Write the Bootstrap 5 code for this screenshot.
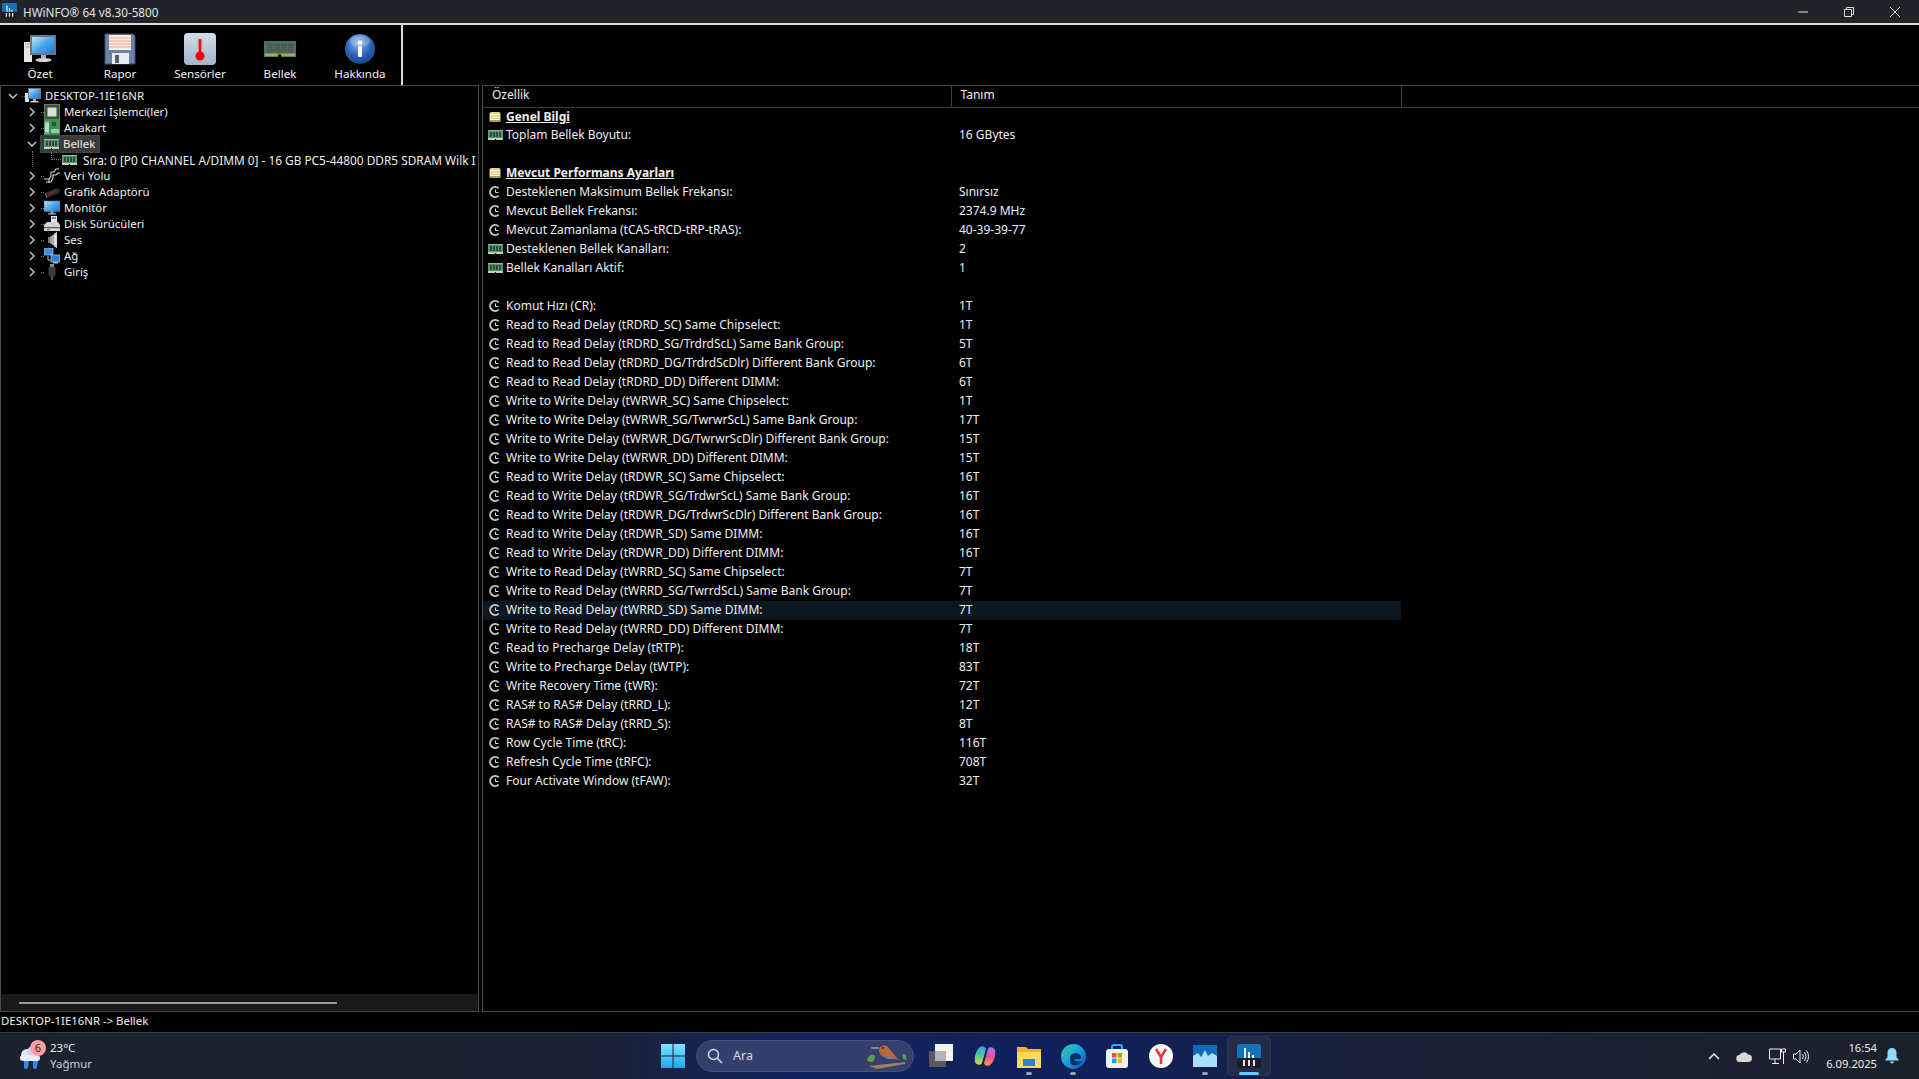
<!DOCTYPE html>
<html lang="en">
<head>
  <meta charset="UTF-8" />
  <meta name="viewport" content="width=device-width, initial-scale=1.0" />
  <title>HWiNFO 64</title>
  <link href="https://cdn.jsdelivr.net/npm/bootstrap@5.3.0/dist/css/bootstrap.min.css" rel="stylesheet" />
  <style>
    html, body { height: 100%; }
    body { background: #000; color: #eee; font-family: "Noto Sans", "Liberation Sans", sans-serif; font-size: 12px; line-height: 16px; overflow: hidden; }
    svg { flex: none; }
    .app-shell { height: 1079px; }
    .title-strip { height: 25px; background: #202327; border-bottom: 2px solid #dcdcdc; flex: none; font-size: 11.7px; color: #e4e4e4; }
    .title-strip .app-logo { margin: 0 6px 2px 2px; }
    .win-ctl { width: 46px; }
    .win-ctls { padding-right: 1px; }
    .tool-strip { height: 60px; flex: none; }
    .tool-items { width: 403px; border-right: 2px solid #dcdcdc; }
    .tool-btn { width: 80px; padding-top: 8px; text-align: center; color: #f0f0f0; font-size: 11.6px; }
    .tool-btn svg { display: block; margin: 0 auto 1px; }
    .work-area { height: 927px; flex: none; }
    .tree-pane { width: 479px; border: 1px solid #4a4a4a; font-size: 11.4px; }
    .tree-scroll { padding-top: 2px; overflow: hidden; }
    .tree-row { height: 16px; white-space: nowrap; display: flex; align-items: center; }
    .tree-l0 { padding-left: 7px; }
    .tree-l1 { padding-left: 26px; }
    .tree-child { padding-left: 61px; position: relative; }
    .tree-child::before { content: ""; position: absolute; left: 31px; top: -1px; height: 16px; border-left: 1px dotted #666; }
    .tree-child::after { content: ""; position: absolute; left: 50px; top: 0; width: 10px; height: 8px; border-left: 1px dotted #777; border-bottom: 1px dotted #777; }
    .tree-stub { width: 3px; margin: 0 0 0 4px; border-top: 1px dotted #777; flex: none; }
    .tree-text { margin-left: 4px; }
    .tree-child .tree-text { margin-left: 6px; font-size: 11.85px; }
    .tree-picked { background: #3b3b3b; outline: 1px solid #444; margin-left: -3px; padding: 0 3px 0 3px; height: 16px; display: flex; align-items: center; width: 58px; }
    .h-scroll { height: 17px; background: #191919; padding: 8px 18px 0; flex: none; }
    .h-thumb { width: 318px; height: 2px; background: #9a9a9a; }
    .detail-pane { margin-left: 3px; flex: 1; border: 1px solid #4a4a4a; border-right: 0; overflow: hidden; }
    .detail-table { table-layout: fixed; width: 1436px; margin: 0; --bs-table-bg: transparent; --bs-table-color: #eee; color: #eee; }
    .detail-table > * > tr > * { padding: 0; height: 19px; line-height: 18px; border: 0; white-space: nowrap; overflow: hidden; box-shadow: none; vertical-align: top; }
    .detail-table > thead > tr > th { height: 21px; line-height: 17px; font-weight: 400; padding-left: 9px; border-bottom: 1px solid #3c3c3c; border-right: 1px solid #3c3c3c; }
    .detail-table > thead > tr > th:last-child { border-right: 0; }
    .detail-table td:nth-child(2) { padding-left: 8px; }
    .prop-cell { display: flex; align-items: center; height: 18px; padding-left: 3px; }
    .prop-ico { width: 18px; margin-right: 2px; display: flex; justify-content: center; flex: none; }
    .sect-title { font-weight: 700; text-decoration: underline; }
    .detail-table tr.row-hot > td:not(:last-child) { background: #0c1722; }
    .status-line { height: 20px; flex: none; padding-left: 1px; line-height: 17px; color: #f0f0f0; font-size: 11.4px; }
    .task-strip { height: 47px; flex: none; border-top: 1px solid #3a3d45; background: linear-gradient(90deg, #1c222d 0%, #1c2333 30%, #12235f 42%, #11205a 58%, #1a2236 72%, #1b212b 100%); color: #eee; }
    .weather-box { width: 661px; padding-left: 18px; flex: none; }
    .weather-ico { position: relative; width: 28px; height: 30px; margin-right: 4px; }
    .weather-badge { position: absolute; left: 12px; top: -1px; width: 16px; height: 16px; border-radius: 50%; background: #ff9ea3; color: #222; font-size: 11px; line-height: 16px; text-align: center; }
    .weather-txt { line-height: 16px; font-size: 11.5px; }
    .weather-txt div + div { color: #c9ccd2; }
    .search-pill { width: 218px; height: 32px; margin: 0 5px 0 11px; border-radius: 16px; background: #343f6b; border: 1px solid #45507a; padding: 0 4px 0 10px; color: #d8dbe6; font-size: 12.5px; }
    .search-pill span { margin-left: 10px; }
    .dock-btn { width: 44px; height: 40px; position: relative; display: flex; align-items: center; justify-content: center; }
    .dock-open::after { content: ""; position: absolute; left: 19px; bottom: 1px; width: 6px; height: 3px; border-radius: 2px; background: #9aa0ad; }
    .dock-on { background: #232b48; border-radius: 4px; border: 1px solid #2b3553; }
    .dock-on::after { content: ""; position: absolute; left: 11px; bottom: 0; width: 20px; height: 3px; border-radius: 2px; background: #60cdff; }
    .tray-box { margin-left: auto; padding-right: 20px; }
    .tray-net { margin-right: 6px; }
    .tray-clock { text-align: right; line-height: 16px; font-size: 11.2px; margin: 0 8px 0 17px; }
  </style>
</head>
<body>
  <svg width="0" height="0" class="position-absolute">
    <defs>
      <linearGradient id="gScreen" x1="0" y1="0" x2="1" y2="1"><stop offset="0" stop-color="#bfe6fb"/><stop offset=".5" stop-color="#4da8ea"/><stop offset="1" stop-color="#1f76cf"/></linearGradient>
      <linearGradient id="gTile" x1="0" y1="0" x2="0" y2="1"><stop offset="0" stop-color="#d5dde6"/><stop offset="1" stop-color="#9fb4cc"/></linearGradient>
      <radialGradient id="gOrb" cx=".45" cy=".3" r=".8"><stop offset="0" stop-color="#8fb8ea"/><stop offset=".55" stop-color="#2a62b8"/><stop offset="1" stop-color="#123a80"/></radialGradient>
      <linearGradient id="gEdge" x1="0" y1="0" x2="1" y2="1"><stop offset="0" stop-color="#35d29a"/><stop offset=".5" stop-color="#1b9de2"/><stop offset="1" stop-color="#0c4aa6"/></linearGradient>
      <linearGradient id="gCopL" x1="0" y1="0" x2="0" y2="1"><stop offset="0" stop-color="#2f9bf0"/><stop offset=".55" stop-color="#57cf8a"/><stop offset="1" stop-color="#e8d23e"/></linearGradient>
      <linearGradient id="gCopR" x1="0" y1="0" x2="0" y2="1"><stop offset="0" stop-color="#a678f0"/><stop offset=".5" stop-color="#ea4f9f"/><stop offset="1" stop-color="#f59a3c"/></linearGradient>
      <linearGradient id="gWin" x1="0" y1="0" x2="0" y2="1"><stop offset="0" stop-color="#7fe3ff"/><stop offset="1" stop-color="#1ea8ea"/></linearGradient>

      <symbol id="i-desk-big" viewBox="0 0 32 32">
        <path d="M0 9h8v20H0z" fill="#e4e6e8"/><path d="M1 11h6M1 14h6" stroke="#9aa" stroke-width="1"/>
        <rect x="6" y="2" width="26" height="20" fill="#6d7580"/><rect x="8" y="4" width="22" height="16" fill="url(#gScreen)"/>
        <path d="M17 22h5v4h-5z" fill="#a8aeb4"/><ellipse cx="19.500" cy="27" rx="8" ry="2" fill="#d2d5d8"/>
      </symbol>
      <symbol id="i-floppy" viewBox="0 0 32 32">
        <path d="M1 1h28l2 2v28H1z" fill="#6b83a8" stroke="#3d5070"/>
        <rect x="5" y="2" width="22" height="15" fill="#fdeee6"/><path d="M5 5h22M5 8h22M5 11h22M5 14h22" stroke="#f2a488" stroke-width="1"/>
        <rect x="8" y="20" width="17" height="11" fill="#e9edf2"/><rect x="11" y="22" width="4" height="8" fill="#4a6080"/>
      </symbol>
      <symbol id="i-thermo" viewBox="0 0 32 32">
        <rect width="32" height="32" rx="4" fill="url(#gTile)"/>
        <rect x="13.500" y="4" width="5" height="18" rx="2.500" fill="#e9dede" stroke="#b9a8a8" stroke-width=".5"/>
        <rect x="14.500" y="6" width="3" height="16" fill="#d8181f"/><circle cx="16" cy="23" r="4.500" fill="#f00010"/>
      </symbol>
      <symbol id="i-ram" viewBox="0 0 28 16">
        <rect x="0" y="1" width="28" height="10" fill="#3f7a55"/><rect x="0" y="11" width="28" height="4" fill="#4e8a60"/>
        <rect x="3" y="3" width="5" height="7" fill="#54585c"/><rect x="9" y="3" width="5" height="7" fill="#54585c"/><rect x="15" y="3" width="5" height="7" fill="#54585c"/><rect x="21" y="3" width="5" height="7" fill="#54585c"/>
        <rect x="1" y="12" width="11" height="2" fill="#c79a55"/><rect x="15" y="12" width="12" height="2" fill="#c79a55"/><rect x="12.500" y="13" width="2.500" height="3" fill="#000"/>
      </symbol>
      <symbol id="i-ramlet" viewBox="0 0 15 10">
        <rect x="0" y="0" width="15" height="10" fill="#4f9a6c"/><rect x="0" y="0" width="15" height="1" fill="#7cc095"/>
        <path d="M2 2h2v5H2zM5 2h2v5H5zM8 2h2v5H8zM11 2h2v5h-2z" fill="#3c4440"/>
        <rect x="0" y="8" width="15" height="2" fill="#b9d8a8"/><rect x="7" y="9" width="1" height="1" fill="#000"/>
      </symbol>
      <symbol id="i-info" viewBox="0 0 32 32">
        <circle cx="16" cy="16" r="15" fill="url(#gOrb)"/><ellipse cx="16" cy="8" rx="10" ry="5.500" fill="#fff" opacity=".22"/>
        <circle cx="16" cy="9.500" r="2.300" fill="#fff"/><rect x="14" y="13" width="4" height="11" rx="1" fill="#fff"/>
      </symbol>
      <symbol id="i-desk" viewBox="0 0 16 16">
        <path d="M0 5h4v9H0z" fill="#dfe2e4"/><rect x="3" y="0" width="13" height="11" fill="#6d7580"/><rect x="4" y="1" width="11" height="9" fill="url(#gScreen)"/>
        <path d="M8 11h3v2H8z" fill="#9aa"/><rect x="5.500" y="13" width="8" height="1.500" fill="#ccd"/>
      </symbol>
      <symbol id="i-cpu" viewBox="0 0 16 16">
        <rect x="0" y="0" width="16" height="16" fill="#2e5a3c"/><rect x="0.500" y="0.500" width="15" height="15" fill="none" stroke="#b39a4c" stroke-dasharray="1 1"/>
        <rect x="3.500" y="3.500" width="9" height="9" fill="#dcdcdc"/>
      </symbol>
      <symbol id="i-board" viewBox="0 0 16 16">
        <rect width="16" height="15" fill="#3c8f5c"/><rect x="1" y="3" width="4" height="9" fill="#a5cfae"/><rect x="8" y="2" width="4" height="4" fill="#1e5a36"/><rect x="7" y="9" width="8" height="4" fill="#8fd0a0"/><path d="M2 1v13M4 1v13" stroke="#dfeee0" stroke-width=".7"/>
      </symbol>
      <symbol id="i-bus" viewBox="0 0 16 16">
        <path d="M0 11h5l2-3V4h3l2-3h3M2 14h5l2-4V7h3l2-2h2M5 11v4" fill="none" stroke="#d5d5d5" stroke-width="1.100"/>
      </symbol>
      <symbol id="i-gpu" viewBox="0 0 16 16">
        <path d="M1 9 13 4l3 2-1 3-12 5z" fill="#2c2c2c"/><path d="M3 10l9-4 1 1-9 4z" fill="#8f2a2e"/><path d="M1 9l2 5" stroke="#777"/>
      </symbol>
      <symbol id="i-mon" viewBox="0 0 16 16">
        <rect y="1" width="16" height="10.500" fill="url(#gScreen)" stroke="#3b8bd0" stroke-width=".5"/><rect x="6.500" y="11.500" width="3" height="2" fill="#9ab"/><rect x="4" y="13.500" width="8" height="1" fill="#cdd"/>
      </symbol>
      <symbol id="i-disk" viewBox="0 0 16 16">
        <path d="M7 0h6v6H7z" fill="#dfe6ee"/><path d="M8 1h4v2H8z" fill="#4e86c8"/><path d="M3 6h11l2 3v6H0V9z" fill="#d3d5d7"/><rect x="0" y="11" width="16" height="1.200" fill="#555"/><rect x="3" y="13" width="3" height="1" fill="#4f9f5f"/>
      </symbol>
      <symbol id="i-speak" viewBox="0 0 16 16">
        <path d="M6 5l7-5v16l-7-5z" fill="#a8a8a8"/><path d="M10 2l3-2v16l-3-2z" fill="#dcdcdc"/><rect x="4" y="5" width="2" height="6" fill="#777"/>
      </symbol>
      <symbol id="i-net" viewBox="0 0 16 16">
        <rect x="0" y="0" width="9" height="7" fill="#3f8fe0" stroke="#bcd" stroke-width=".6"/><rect x="7" y="7" width="9" height="7" fill="#2f7fd8" stroke="#cde" stroke-width=".6"/><path d="M4 8v4h3" stroke="#bbb" fill="none"/><rect x="9" y="14" width="5" height="1.500" fill="#bbb"/>
      </symbol>
      <symbol id="i-usb" viewBox="0 0 16 16">
        <rect x="6" y="0" width="4" height="3" fill="#888"/><path d="M4.500 3h7v8l-2 2h-3l-2-2z" fill="#3d3d3d"/><rect x="7" y="13" width="2" height="3" fill="#555"/>
      </symbol>
      <symbol id="i-chev-r" viewBox="0 0 10 10"><path d="M3 1l4 4-4 4" fill="none" stroke="#cfcfcf" stroke-width="1.400"/></symbol>
      <symbol id="i-chev-d" viewBox="0 0 10 10"><path d="M1 3l4 4 4-4" fill="none" stroke="#cfcfcf" stroke-width="1.400"/></symbol>
      <symbol id="i-clock" viewBox="0 0 12 12">
        <path d="M9.600 2.400A5 5 0 1 0 9.600 9.600" fill="none" stroke="#c4c4c4" stroke-width="2"/><path d="M6.500 3.500V6.500H9.500" fill="none" stroke="#d8d8d8" stroke-width="1"/>
      </symbol>
      <symbol id="i-sect" viewBox="0 0 12 12">
        <rect x="0.500" y="1" width="11" height="10" rx="2" fill="#e6d48c"/><path d="M1 3.500h10M1 6h10M1 8.500h10" stroke="#faf6df" stroke-width="1"/><rect x="0.500" y="9" width="11" height="2" rx="1" fill="#b49d52"/>
      </symbol>
      <symbol id="i-hw" viewBox="0 0 24 24">
        <rect width="24" height="15" rx="2" fill="#1273b8"/><rect y="14" width="24" height="10" rx="2" fill="#1b1d22"/>
        <path d="M7 4h2v10H7zM11 8h2v6h-2zM15 11h2v3h-2z" fill="#e8f4fb"/><path d="M6 16h2v6H6zM11 16h2v6h-2zM16 16h2v6h-2z" fill="#e8e8e8"/>
      </symbol>
    </defs>
  </svg>

  <div class="app-shell d-flex flex-column">
    <div class="title-strip d-flex align-items-center">
      <svg class="app-logo" width="15" height="15"><use href="#i-hw"/></svg>
      <span>HWiNFO® 64 v8.30-5800</span>
      <div class="win-ctls ms-auto d-flex">
        <div class="win-ctl d-flex justify-content-center"><svg width="12" height="12"><path d="M1 6h10" stroke="#ddd"/></svg></div>
        <div class="win-ctl d-flex justify-content-center"><svg width="12" height="12"><path d="M1.500 3.500h7v7h-7zM3.500 3.500v-2h7v7h-2" fill="none" stroke="#ddd"/></svg></div>
        <div class="win-ctl d-flex justify-content-center"><svg width="12" height="12"><path d="M1 1l10 10M11 1L1 11" stroke="#ddd"/></svg></div>
      </div>
    </div>

    <div class="tool-strip d-flex">
      <div class="tool-items d-flex ps-0">
        <div class="tool-btn"><svg width="32" height="32"><use href="#i-desk-big"/></svg>Özet</div>
        <div class="tool-btn"><svg width="32" height="32"><use href="#i-floppy"/></svg>Rapor</div>
        <div class="tool-btn"><svg width="32" height="32"><use href="#i-thermo"/></svg>Sensörler</div>
        <div class="tool-btn"><svg width="32" height="32" viewBox="0 0 28 28"><use href="#i-ram" width="28" height="16" y="6"/></svg>Bellek</div>
        <div class="tool-btn"><svg width="32" height="32"><use href="#i-info"/></svg>Hakkında</div>
      </div>
    </div>

    <div class="work-area d-flex">
      <div class="tree-pane d-flex flex-column">
        <div class="tree-scroll flex-grow-1">
          <div class="tree-row tree-l0"><svg width="10" height="10"><use href="#i-chev-d"/></svg><span class="tree-stub"></span><svg width="16" height="16"><use href="#i-desk"/></svg><span class="tree-text">DESKTOP-1IE16NR</span></div>
          <div class="tree-row tree-l1"><svg width="10" height="10"><use href="#i-chev-r"/></svg><span class="tree-stub"></span><svg width="16" height="16"><use href="#i-cpu"/></svg><span class="tree-text">Merkezi İşlemci(ler)</span></div>
          <div class="tree-row tree-l1"><svg width="10" height="10"><use href="#i-chev-r"/></svg><span class="tree-stub"></span><svg width="16" height="16"><use href="#i-board"/></svg><span class="tree-text">Anakart</span></div>
          <div class="tree-row tree-l1"><svg width="10" height="10"><use href="#i-chev-d"/></svg><span class="tree-stub"></span><span class="tree-picked"><svg width="15" height="10"><use href="#i-ramlet"/></svg><span class="tree-text">Bellek</span></span></div>
          <div class="tree-row tree-child"><svg width="15" height="10"><use href="#i-ramlet"/></svg><span class="tree-text">Sıra: 0 [P0 CHANNEL A/DIMM 0] - 16 GB PC5-44800 DDR5 SDRAM Wilk I</span></div>
          <div class="tree-row tree-l1"><svg width="10" height="10"><use href="#i-chev-r"/></svg><span class="tree-stub"></span><svg width="16" height="16"><use href="#i-bus"/></svg><span class="tree-text">Veri Yolu</span></div>
          <div class="tree-row tree-l1"><svg width="10" height="10"><use href="#i-chev-r"/></svg><span class="tree-stub"></span><svg width="16" height="16"><use href="#i-gpu"/></svg><span class="tree-text">Grafik Adaptörü</span></div>
          <div class="tree-row tree-l1"><svg width="10" height="10"><use href="#i-chev-r"/></svg><span class="tree-stub"></span><svg width="16" height="16"><use href="#i-mon"/></svg><span class="tree-text">Monitör</span></div>
          <div class="tree-row tree-l1"><svg width="10" height="10"><use href="#i-chev-r"/></svg><span class="tree-stub"></span><svg width="16" height="16"><use href="#i-disk"/></svg><span class="tree-text">Disk Sürücüleri</span></div>
          <div class="tree-row tree-l1"><svg width="10" height="10"><use href="#i-chev-r"/></svg><span class="tree-stub"></span><svg width="16" height="16"><use href="#i-speak"/></svg><span class="tree-text">Ses</span></div>
          <div class="tree-row tree-l1"><svg width="10" height="10"><use href="#i-chev-r"/></svg><span class="tree-stub"></span><svg width="16" height="16"><use href="#i-net"/></svg><span class="tree-text">Ağ</span></div>
          <div class="tree-row tree-l1"><svg width="10" height="10"><use href="#i-chev-r"/></svg><span class="tree-stub"></span><svg width="16" height="16"><use href="#i-usb"/></svg><span class="tree-text">Giriş</span></div>
        </div>
        <div class="h-scroll"><div class="h-thumb"></div></div>
      </div>

      <div class="detail-pane">
        <table class="table detail-table">
          <colgroup><col style="width:468px"><col style="width:450px"><col></colgroup>
          <thead><tr><th>Özellik</th><th>Tanım</th><th></th></tr></thead>
          <tbody>
            <tr><td><div class="prop-cell"><span class="prop-ico"><svg width="12" height="12"><use href="#i-sect"/></svg></span><span class="sect-title">Genel Bilgi</span></div></td><td></td><td></td></tr>
            <tr><td><div class="prop-cell"><span class="prop-ico"><svg width="15" height="10"><use href="#i-ramlet"/></svg></span>Toplam Bellek Boyutu:</div></td><td>16 GBytes</td><td></td></tr>
            <tr><td></td><td></td><td></td></tr>
            <tr><td><div class="prop-cell"><span class="prop-ico"><svg width="12" height="12"><use href="#i-sect"/></svg></span><span class="sect-title">Mevcut Performans Ayarları</span></div></td><td></td><td></td></tr>
            <tr><td><div class="prop-cell"><span class="prop-ico"><svg width="12" height="12"><use href="#i-clock"/></svg></span>Desteklenen Maksimum Bellek Frekansı:</div></td><td>Sınırsız</td><td></td></tr>
            <tr><td><div class="prop-cell"><span class="prop-ico"><svg width="12" height="12"><use href="#i-clock"/></svg></span>Mevcut Bellek Frekansı:</div></td><td>2374.9 MHz</td><td></td></tr>
            <tr><td><div class="prop-cell"><span class="prop-ico"><svg width="12" height="12"><use href="#i-clock"/></svg></span>Mevcut Zamanlama (tCAS-tRCD-tRP-tRAS):</div></td><td>40-39-39-77</td><td></td></tr>
            <tr><td><div class="prop-cell"><span class="prop-ico"><svg width="15" height="10"><use href="#i-ramlet"/></svg></span>Desteklenen Bellek Kanalları:</div></td><td>2</td><td></td></tr>
            <tr><td><div class="prop-cell"><span class="prop-ico"><svg width="15" height="10"><use href="#i-ramlet"/></svg></span>Bellek Kanalları Aktif:</div></td><td>1</td><td></td></tr>
            <tr><td></td><td></td><td></td></tr>
            <tr><td><div class="prop-cell"><span class="prop-ico"><svg width="12" height="12"><use href="#i-clock"/></svg></span>Komut Hızı (CR):</div></td><td>1T</td><td></td></tr>
            <tr><td><div class="prop-cell"><span class="prop-ico"><svg width="12" height="12"><use href="#i-clock"/></svg></span>Read to Read Delay (tRDRD_SC) Same Chipselect:</div></td><td>1T</td><td></td></tr>
            <tr><td><div class="prop-cell"><span class="prop-ico"><svg width="12" height="12"><use href="#i-clock"/></svg></span>Read to Read Delay (tRDRD_SG/TrdrdScL) Same Bank Group:</div></td><td>5T</td><td></td></tr>
            <tr><td><div class="prop-cell"><span class="prop-ico"><svg width="12" height="12"><use href="#i-clock"/></svg></span>Read to Read Delay (tRDRD_DG/TrdrdScDlr) Different Bank Group:</div></td><td>6T</td><td></td></tr>
            <tr><td><div class="prop-cell"><span class="prop-ico"><svg width="12" height="12"><use href="#i-clock"/></svg></span>Read to Read Delay (tRDRD_DD) Different DIMM:</div></td><td>6T</td><td></td></tr>
            <tr><td><div class="prop-cell"><span class="prop-ico"><svg width="12" height="12"><use href="#i-clock"/></svg></span>Write to Write Delay (tWRWR_SC) Same Chipselect:</div></td><td>1T</td><td></td></tr>
            <tr><td><div class="prop-cell"><span class="prop-ico"><svg width="12" height="12"><use href="#i-clock"/></svg></span>Write to Write Delay (tWRWR_SG/TwrwrScL) Same Bank Group:</div></td><td>17T</td><td></td></tr>
            <tr><td><div class="prop-cell"><span class="prop-ico"><svg width="12" height="12"><use href="#i-clock"/></svg></span>Write to Write Delay (tWRWR_DG/TwrwrScDlr) Different Bank Group:</div></td><td>15T</td><td></td></tr>
            <tr><td><div class="prop-cell"><span class="prop-ico"><svg width="12" height="12"><use href="#i-clock"/></svg></span>Write to Write Delay (tWRWR_DD) Different DIMM:</div></td><td>15T</td><td></td></tr>
            <tr><td><div class="prop-cell"><span class="prop-ico"><svg width="12" height="12"><use href="#i-clock"/></svg></span>Read to Write Delay (tRDWR_SC) Same Chipselect:</div></td><td>16T</td><td></td></tr>
            <tr><td><div class="prop-cell"><span class="prop-ico"><svg width="12" height="12"><use href="#i-clock"/></svg></span>Read to Write Delay (tRDWR_SG/TrdwrScL) Same Bank Group:</div></td><td>16T</td><td></td></tr>
            <tr><td><div class="prop-cell"><span class="prop-ico"><svg width="12" height="12"><use href="#i-clock"/></svg></span>Read to Write Delay (tRDWR_DG/TrdwrScDlr) Different Bank Group:</div></td><td>16T</td><td></td></tr>
            <tr><td><div class="prop-cell"><span class="prop-ico"><svg width="12" height="12"><use href="#i-clock"/></svg></span>Read to Write Delay (tRDWR_SD) Same DIMM:</div></td><td>16T</td><td></td></tr>
            <tr><td><div class="prop-cell"><span class="prop-ico"><svg width="12" height="12"><use href="#i-clock"/></svg></span>Read to Write Delay (tRDWR_DD) Different DIMM:</div></td><td>16T</td><td></td></tr>
            <tr><td><div class="prop-cell"><span class="prop-ico"><svg width="12" height="12"><use href="#i-clock"/></svg></span>Write to Read Delay (tWRRD_SC) Same Chipselect:</div></td><td>7T</td><td></td></tr>
            <tr><td><div class="prop-cell"><span class="prop-ico"><svg width="12" height="12"><use href="#i-clock"/></svg></span>Write to Read Delay (tWRRD_SG/TwrrdScL) Same Bank Group:</div></td><td>7T</td><td></td></tr>
            <tr class="row-hot"><td><div class="prop-cell"><span class="prop-ico"><svg width="12" height="12"><use href="#i-clock"/></svg></span>Write to Read Delay (tWRRD_SD) Same DIMM:</div></td><td>7T</td><td></td></tr>
            <tr><td><div class="prop-cell"><span class="prop-ico"><svg width="12" height="12"><use href="#i-clock"/></svg></span>Write to Read Delay (tWRRD_DD) Different DIMM:</div></td><td>7T</td><td></td></tr>
            <tr><td><div class="prop-cell"><span class="prop-ico"><svg width="12" height="12"><use href="#i-clock"/></svg></span>Read to Precharge Delay (tRTP):</div></td><td>18T</td><td></td></tr>
            <tr><td><div class="prop-cell"><span class="prop-ico"><svg width="12" height="12"><use href="#i-clock"/></svg></span>Write to Precharge Delay (tWTP):</div></td><td>83T</td><td></td></tr>
            <tr><td><div class="prop-cell"><span class="prop-ico"><svg width="12" height="12"><use href="#i-clock"/></svg></span>Write Recovery Time (tWR):</div></td><td>72T</td><td></td></tr>
            <tr><td><div class="prop-cell"><span class="prop-ico"><svg width="12" height="12"><use href="#i-clock"/></svg></span>RAS# to RAS# Delay (tRRD_L):</div></td><td>12T</td><td></td></tr>
            <tr><td><div class="prop-cell"><span class="prop-ico"><svg width="12" height="12"><use href="#i-clock"/></svg></span>RAS# to RAS# Delay (tRRD_S):</div></td><td>8T</td><td></td></tr>
            <tr><td><div class="prop-cell"><span class="prop-ico"><svg width="12" height="12"><use href="#i-clock"/></svg></span>Row Cycle Time (tRC):</div></td><td>116T</td><td></td></tr>
            <tr><td><div class="prop-cell"><span class="prop-ico"><svg width="12" height="12"><use href="#i-clock"/></svg></span>Refresh Cycle Time (tRFC):</div></td><td>708T</td><td></td></tr>
            <tr><td><div class="prop-cell"><span class="prop-ico"><svg width="12" height="12"><use href="#i-clock"/></svg></span>Four Activate Window (tFAW):</div></td><td>32T</td><td></td></tr>
          </tbody>
        </table>
      </div>
    </div>

    <div class="status-line">DESKTOP-1IE16NR -&gt; Bellek</div>

    <div class="task-strip d-flex align-items-center">
      <div class="weather-box d-flex align-items-center">
        <div class="weather-ico">
          <svg width="28" height="30" viewBox="0 0 28 30">
            <circle cx="9" cy="14" r="6" fill="#dfeaf8"/><circle cx="15" cy="11" r="6" fill="#c4d6ee"/><rect x="2" y="14" width="20" height="6" rx="3" fill="#e7eef8"/>
            <path d="M6 20h5l-1 6a2 2 0 0 1-4 0zM15 20h5l-1 6a2 2 0 0 1-4 0z" fill="#2f8df2"/>
          </svg>
          <div class="weather-badge">6</div>
        </div>
        <div class="weather-txt"><div>23°C</div><div>Yağmur</div></div>
      </div>

      <svg width="24" height="24" viewBox="0 0 24 24"><path d="M0 0h11.500v11.500H0zM12.500 0H24v11.500H12.500zM0 12.500h11.500V24H0zM12.500 12.500H24V24H12.500z" fill="url(#gWin)"/></svg>

      <div class="search-pill d-flex align-items-center">
        <svg width="16" height="16" viewBox="0 0 16 16"><circle cx="6.500" cy="6.500" r="5" fill="none" stroke="#dde" stroke-width="1.400"/><path d="M10 10l5 5" stroke="#dde" stroke-width="1.400"/></svg>
        <span>Ara</span>
        <svg class="ms-auto" width="44" height="28" viewBox="0 0 44 28">
          <path d="M2 18c2-6 6-6 8-4 0 6-4 8-8 4zM38 12c3 0 4 3 3 6-3 0-4-3-3-6z" fill="#5f9a4e"/>
          <path d="M4 24l36-4v2L12 27z" fill="#9c7f5c"/>
          <path d="M14 8c0-4 6-6 9-3l3 4 8 9-8-2c-7 1-12-3-12-8z" fill="#b8683a"/><path d="M20 12l10 5-8 0z" fill="#6f7fa8"/><circle cx="18" cy="6" r="1" fill="#222"/><path d="M14 6H6" stroke="#ccc"/>
        </svg>
      </div>

      <div class="dock-btn"><svg width="24" height="24" viewBox="0 0 24 24"><rect x="0" y="7" width="17" height="16" fill="#5a5a5e"/><rect x="6" y="0" width="18" height="17" fill="#f2f2f2"/><rect x="6" y="7" width="11" height="10" fill="#b4b4b8"/></svg></div>
      <div class="dock-btn"><svg width="24" height="24" viewBox="0 0 24 24"><path d="M7 3c3-2 6 0 6 2l-4 14c-1 3-6 2-7-1-1-5 1-12 5-15z" fill="url(#gCopL)"/><path d="M17 21c-3 2-6 0-6-2l4-14c1-3 6-2 7 1 1 5-1 12-5 15z" fill="url(#gCopR)"/></svg></div>
      <div class="dock-btn dock-open"><svg width="24" height="24" viewBox="0 0 24 24"><path d="M0 3h9l2 2h13v19H0z" fill="#f0b429"/><path d="M0 8h24v16H0z" fill="#ffd95e"/><rect x="6" y="15" width="12" height="7" fill="#1e88d4"/></svg></div>
      <div class="dock-btn dock-open"><svg width="25" height="25" viewBox="0 0 25 25"><circle cx="12.500" cy="12.500" r="12.500" fill="url(#gEdge)"/><path d="M9 14c0-4 5-6 9-4 2 1 3 4 1 5h-6c1 3 6 3 8 2-2 4-8 6-11 3-1-1-1-4-1-6z" fill="#0d2f66"/></svg></div>
      <div class="dock-btn"><svg width="24" height="24" viewBox="0 0 24 24"><path d="M7 6V3a2 2 0 0 1 2-2h6a2 2 0 0 1 2 2v3" fill="none" stroke="#28b4ef" stroke-width="2"/><rect x="1" y="5" width="22" height="19" rx="3" fill="#f3f3f3"/><rect x="7" y="9" width="4.500" height="4.500" fill="#e5532d"/><rect x="12.500" y="9" width="4.500" height="4.500" fill="#7fb900"/><rect x="7" y="14.500" width="4.500" height="4.500" fill="#00a3ee"/><rect x="12.500" y="14.500" width="4.500" height="4.500" fill="#ffb700"/></svg></div>
      <div class="dock-btn"><svg width="24" height="24" viewBox="0 0 24 24"><circle cx="12" cy="12" r="12" fill="#fbfbfb"/><path d="M7 5l5 8 5-8M12 13v7" fill="none" stroke="#f0353b" stroke-width="2.600"/></svg></div>
      <div class="dock-btn dock-open"><svg width="24" height="22" viewBox="0 0 24 22"><rect width="24" height="22" fill="#0f6cbd"/><path d="M0 22V11l5-3 3 4 4-7 3 6 4-3 5 3v11z" fill="#a8def7"/></svg></div>
      <div class="dock-btn dock-on"><svg width="24" height="24"><use href="#i-hw"/></svg></div>

      <div class="tray-box d-flex align-items-center">
        <svg class="me-3" width="12" height="8" viewBox="0 0 12 8"><path d="M1 7l5-5 5 5" fill="none" stroke="#eee" stroke-width="1.500"/></svg>
        <svg class="me-3" width="17" height="11" viewBox="0 0 17 11"><path d="M4 11a3.500 3.500 0 0 1-.5-7A5 5 0 0 1 12 3.500 3.800 3.800 0 0 1 13 11z" fill="#d8d8d8"/></svg>
        <svg class="tray-net" width="18" height="17" viewBox="0 0 18 17"><path d="M.5 1h11v10H.5zM3 15.500h7M6 11v4" fill="none" stroke="#eee"/><path d="M14.500 4v12M12.500 1h4v3h-4z" fill="none" stroke="#eee"/></svg>
        <svg width="16" height="15" viewBox="0 0 16 15"><path d="M.5 5H3l4-4v13l-4-4H.5zM9.500 5q1.500 2.500 0 5M11.500 3q3 4.500 0 9M13.500 1.500q4 6 0 12" fill="none" stroke="#eee"/></svg>
        <div class="tray-clock"><div>16:54</div><div>6.09.2025</div></div>
        <svg width="14" height="16" viewBox="0 0 14 16"><path d="M7 0a4.500 4.500 0 0 0-4.500 4.500V9L0 12.500h14L11.500 9V4.500A4.500 4.500 0 0 0 7 0zM5 13.500h4a2 2 0 0 1-4 0z" fill="#8fdcff"/></svg>
      </div>
    </div>
  </div>
</body>
</html>
